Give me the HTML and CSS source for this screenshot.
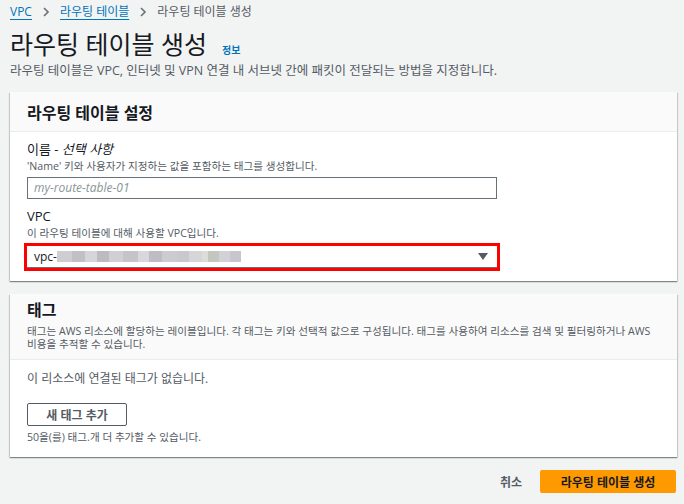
FILE: index.html
```html
<!DOCTYPE html>
<html lang="ko">
<head>
    <meta charset="UTF-8">
    <title>라우팅 테이블 생성</title>
    <link rel="stylesheet" href="styles.css">
</head>
<body>
    <div class="page">
        <nav class="breadcrumb">
            <a href="#">VPC</a>
            <svg class="chev" width="8" height="10" viewBox="0 0 8 10"><path d="M2 1l4 4-4 4" fill="none" stroke="#687078" stroke-width="1.6"/></svg>
            <a href="#">라우팅 테이블</a>
            <svg class="chev" width="8" height="10" viewBox="0 0 8 10"><path d="M2 1l4 4-4 4" fill="none" stroke="#687078" stroke-width="1.6"/></svg>
            <span class="current">라우팅 테이블 생성</span>
        </nav>

        <div class="title-row">
            <h1>라우팅 테이블 생성</h1>
            <a class="info" href="#">정보</a>
        </div>
        <p class="page-desc">라우팅 테이블은 VPC, 인터넷 및 VPN 연결 내 서브넷 간에 패킷이 전달되는 방법을 지정합니다.</p>

        <!-- Settings panel -->
        <div class="panel">
            <div class="panel-header">
                <h2>라우팅 테이블 설정</h2>
            </div>
            <div class="panel-body">
                <label class="field-label">이름 - <i>선택 사항</i></label>
                <div class="field-hint">'Name' 키와 사용자가 지정하는 값을 포함하는 태그를 생성합니다.</div>
                <div class="input">my-route-table-01</div>

                <label class="field-label vpc-label">VPC</label>
                <div class="field-hint">이 라우팅 테이블에 대해 사용할 VPC입니다.</div>
                <div class="highlight">
                    <div class="select">
                        <span class="vpc-id">vpc-</span><span class="masked"></span>
                        <svg class="caret" width="10" height="7" viewBox="0 0 10 7"><path d="M0 0h10L5 7z" fill="#545b64"/></svg>
                    </div>
                </div>
            </div>
        </div>

        <!-- Tags panel -->
        <div class="panel">
            <div class="panel-header tags-header">
                <h2 class="tags-title">태그</h2>
                <p class="tags-desc">태그는 AWS 리소스에 할당하는 레이블입니다. 각 태그는 키와 선택적 값으로 구성됩니다. 태그를 사용하여 리소스를 검색 및 필터링하거나 AWS<br>비용을 추적할 수 있습니다.</p>
            </div>
            <div class="panel-body tags-body">
                <div class="empty">이 리소스에 연결된 태그가 없습니다.</div>
                <button class="btn-normal">새 태그 추가</button>
                <div class="field-hint limit">50을(를) 태그.개 더 추가할 수 있습니다.</div>
            </div>
        </div>

        <div class="actions">
            <a class="cancel" href="#">취소</a>
            <button class="btn-primary">라우팅 테이블 생성</button>
        </div>
    </div>
</body>
</html>
```

FILE: styles.css
```css
body {
    margin: 0;
    background-color: #f2f3f3;
    color: #16191f;
    font-family: "Open Sans", "Noto Sans CJK KR", sans-serif;
}
.page {
    padding: 0 7px 0 10px;
    display: flex;
    flex-direction: column;
}
.breadcrumb {
    display: flex;
    align-items: center;
    gap: 10px;
    padding-top: 4px;
    font-size: 12px;
    line-height: 16px;
}
.breadcrumb a {
    color: #0073bb;
    text-decoration: underline;
    text-underline-offset: 3px;
}
.breadcrumb .current {
    color: #545b64;
}
.title-row {
    display: flex;
    align-items: baseline;
    gap: 15px;
    margin-top: 8px;
}
h1 {
    margin: 0;
    font-size: 25px;
    line-height: 32px;
    font-weight: 400;
}
.info {
    color: #0073bb;
    font-size: 10px;
    font-weight: bold;
    text-decoration: none;
}
.page-desc {
    margin: 3px 0 0;
    font-size: 12.5px;
    line-height: 16px;
    color: #545b64;
}
.panel {
    background-color: white;
    margin-top: 13px;
    box-shadow: 0 1px 1px 0 rgba(0, 28, 36, 0.3), 1px 1px 1px 0 rgba(0, 28, 36, 0.15), -1px 1px 1px 0 rgba(0, 28, 36, 0.15);
}
.panel-header {
    background-color: #fafafa;
    border-bottom: 1px solid #eaeded;
    height: 39px;
    padding: 0 17px;
    display: flex;
    align-items: center;
}
.panel-header h2 {
    margin: 0;
    font-size: 16px;
    font-weight: bold;
}
.panel-body {
    padding: 8px 17px 10px;
    display: flex;
    flex-direction: column;
    align-items: flex-start;
}
.field-label {
    font-size: 13px;
    line-height: 18px;
}
.field-hint {
    font-size: 10.6px;
    line-height: 16px;
    color: #545b64;
}
.input {
    margin-top: 3px;
    box-sizing: border-box;
    width: 470px;
    height: 22px;
    border: 1px solid #687078;
    padding: 0 6px;
    font-size: 12px;
    line-height: 20px;
    font-style: italic;
    color: #879596;
}
.vpc-label {
    margin-top: 8px;
}
.highlight {
    margin: 2px 0 0 -3px;
    border: 3px solid #ff0000;
}
.select {
    box-sizing: border-box;
    width: 470px;
    height: 22px;
    border-bottom: 1px solid #687078;
    padding: 0 7px;
    display: flex;
    align-items: center;
    font-size: 12px;
}
.vpc-id {
    color: #16191f;
}
.masked {
    width: 184px;
    height: 11px;
    background:
        linear-gradient(90deg, #cfcdd2 0 8%, #c2bfc6 8% 15%, #d6d6da 15% 22%, #bdbac0 22% 28%, #d0cfd4 28% 36%, #c6c3c9 36% 44%, #d8d8dc 44% 50%, #bfbcc4 50% 57%, #cccbd0 57% 65%, #c9c8cc 65% 72%, #d6d6d9 72% 79%, #dcdcd8 79% 82%, #c4c6c0 82% 88%, #d2d2d6 88% 94%, #c8c6cc 94% 100%);
}
.caret {
    margin-left: auto;
    margin-right: 2px;
}
.tags-header {
    height: auto;
    padding: 5px 17px 8px;
    display: block;
}
.panel-header .tags-title {
    font-size: 16px;
    line-height: 22px;
}
.tags-desc {
    margin: 4px 0 0;
    font-size: 10.6px;
    line-height: 13px;
    color: #545b64;
    white-space: nowrap;
}
.tags-body {
    padding: 11px 17px 13px;
}
.empty {
    font-size: 12px;
    line-height: 16px;
    color: #545b64;
}
.btn-normal {
    margin-top: 16px;
    width: 100px;
    height: 23px;
    background-color: white;
    border: 1px solid #545b64;
    border-radius: 2px;
    font-family: inherit;
    font-size: 12px;
    font-weight: bold;
    color: #545b64;
    padding: 0;
}
.limit {
    margin-top: 4px;
    line-height: 14px;
}
.actions {
    display: flex;
    justify-content: flex-end;
    align-items: center;
    gap: 18px;
    margin-top: 13px;
    padding-right: 1px;
}
.cancel {
    color: #545b64;
    font-size: 12px;
    font-weight: bold;
    text-decoration: none;
}
.btn-primary {
    width: 136px;
    height: 23px;
    background-color: #ff9900;
    border: none;
    border-radius: 2px;
    font-family: inherit;
    font-size: 12px;
    font-weight: bold;
    color: #16191f;
    padding: 0;
}
```
